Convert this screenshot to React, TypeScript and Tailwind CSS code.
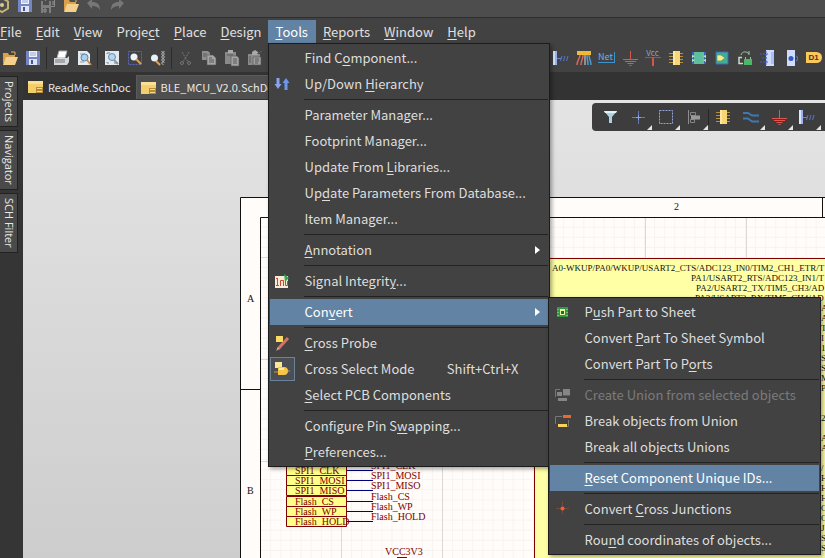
import React from 'react';

type IconProps = { children: React.ReactNode; size?: number };

const Icon: React.FC<IconProps> = ({ children, size = 18 }) => (
  <svg width={size} height={size} viewBox="0 0 18 18" fill="none" className="shrink-0" aria-hidden="true">
    {children}
  </svg>
);

/* ---------- Icons ---------- */

const FolderIcon = () => (
  <Icon>
    <path d="M2 15V4h5l1 2h6v3H6L2 15z" fill="#d9a14d" />
    <path d="M5 8h12l-3 8H2l3-8z" fill="#f5d08c" />
    <path d="M10 3h4v3" stroke="#e8b060" />
  </Icon>
);

const SaveIcon = () => (
  <Icon>
    <path d="M2 2h14v14H2z" fill="#7486c4" />
    <path d="M5 2h8v6H5z" fill="#eef1fa" />
    <path d="M6 4h6M6 6h6" stroke="#9aa6d2" />
    <path d="M5 10h8v6H5z" fill="#dfe4f4" />
    <path d="M7 11h2v4H7z" fill="#46549a" />
  </Icon>
);

const SaveAllIcon = () => (
  <Icon>
    <path d="M6.500 1.500h9v9h-9z" stroke="#8a8a8a" />
    <path d="M2 5h10v12H2z" fill="#7e7e7e" />
    <path d="M4 5h6v4H4zM4 12h6v5H4z" fill="#4d4d4d" />
    <path d="M5 13h2v3H5zM9 3h5M14 5v4" stroke="#9a9a9a" />
  </Icon>
);

const UndoIcon = ({ flip = false }: { flip?: boolean }) => (
  <Icon>
    <g transform={flip ? 'translate(18 0) scale(-1 1)' : undefined}>
      <path d="M2 7l5-4v3c5 0 8 2 8 8-2-3-4-4-8-4v3L2 7z" fill="#777" />
    </g>
  </Icon>
);

const PrintIcon = () => (
  <Icon>
    <path d="M7 2h8l-2 7H5l2-7z" fill="#fff" stroke="#aaa" />
    <path d="M2 9h13l2-2v6l-2 3H2V9z" fill="#d5d9dc" />
    <path d="M3 11h10M3 13h10" stroke="#777" />
  </Icon>
);

const PreviewIcon = () => (
  <Icon>
    <path d="M3 2h9l3 3v11H3z" fill="#e6ebef" />
    <path d="M5 5h5M5 13h4" stroke="#99a" />
    <circle cx="9.500" cy="8.500" r="3.500" fill="#a9d2f0" stroke="#587fa6" />
    <path d="M12 11l4 5" stroke="#c98d4a" strokeWidth="2" />
  </Icon>
);

const ZoomFitIcon = () => (
  <Icon>
    <path d="M2 2h14v14H2z" fill="#e3eaee" />
    <path d="M4 5V4h3M14 13v1h-3M4 13v1h2" stroke="#789" />
    <circle cx="9" cy="8" r="3.500" fill="#b5d6ee" stroke="#6a8cab" />
    <path d="M11 11l4 4" stroke="#8a98a6" strokeWidth="2" />
  </Icon>
);

const ZoomAreaIcon = () => (
  <Icon>
    <path d="M2.500 2.500h13v13h-13z" stroke="#5968b8" strokeDasharray="2 1" />
    <circle cx="8" cy="8" r="3.500" fill="#eef5fa" />
    <path d="M10 10l5 5" stroke="#dfa45c" strokeWidth="2" />
  </Icon>
);

const ZoomObjectIcon = () => (
  <Icon>
    <circle cx="5.500" cy="9" r="3.500" fill="#e8f1f8" />
    <path d="M7 12l4 4" stroke="#dfa45c" strokeWidth="2" />
    <path d="M12.500 2l3 3-3 3 3 3-3 3 2 2M15.500 2l-3 3 3 3-3 3 3 3" stroke="#ddd" strokeWidth=".8" />
  </Icon>
);

const CutIcon = () => (
  <Icon>
    <path d="M5 3l6 10M12 3L6 13" stroke="#777" strokeDasharray="2 1" />
    <circle cx="5" cy="14" r="1.500" stroke="#777" />
    <circle cx="12" cy="14" r="1.500" stroke="#777" />
  </Icon>
);

const CopyIcon = () => (
  <Icon>
    <path d="M2 2h6l2 2v7H2z" fill="#8f8f8f" />
    <path d="M7 6h6l3 3v7H7z" fill="#a5a5a5" stroke="#555" strokeWidth=".6" />
    <path d="M9 9h3M9 11h5M9 13h5M3 5h4M3 7h3" stroke="#5a5a5a" />
  </Icon>
);

const PasteIcon = () => (
  <Icon>
    <path d="M2 3h11v12H2z" fill="#8a8a8a" />
    <path d="M5 1h5v3H5z" fill="#aaa" />
    <path d="M8 7h6l2 2v8H8z" fill="#a3a3a3" stroke="#555" strokeWidth=".6" />
    <path d="M10 10h4M10 12h4M10 14h4M4 6h6" stroke="#5a5a5a" />
  </Icon>
);

const StampIcon = () => (
  <Icon>
    <path d="M2 5h12v11H2z" fill="#8a8a8a" />
    <path d="M6 3l3-2 3 2v3H6z" fill="#a8a8a8" />
    <path d="M7 8h8v8H7z" fill="#9d9d9d" stroke="#555" strokeWidth=".6" />
    <path d="M9 10h4M9 12h4M9 14h3M4 7v7M11 5l5-3" stroke="#5c5c5c" />
  </Icon>
);

const BusEntryIcon = () => (
  <Icon>
    <path d="M1 2h4v14H1z" fill="#dbe6ff" />
    <path d="M4 2v14" stroke="#5d7fe0" />
    <path d="M5 9.500h4" stroke="#6f86c8" />
    <path d="M8.500 12l1.500-5M11.500 12l1.500-5M14.500 12l1.500-5" stroke="#5577d4" />
  </Icon>
);

const HarnessIcon = () => (
  <Icon>
    <path d="M2 2h14v4H2z" fill="#f1b93a" />
    <path d="M5 6c0 4-3 5-3 10M8 6c0 5-2 5-2 10" stroke="#d9695b" strokeWidth="1.500" />
    <path d="M10 6v10" stroke="#ddd" />
    <path d="M12 6c0 5 1 5 1 10M14 6c0 4 2 5 2 10" stroke="#4f9bd0" strokeWidth="1.500" />
  </Icon>
);

const NetLabelIcon = () => (
  <span className="flex h-[11px] items-center border-r border-b border-[#3f93c8] pr-px text-[9px] text-[#69b4e4]">
    Net
  </span>
);

const GroundIcon = () => (
  <Icon>
    <path d="M9.500 2v8M2 10.500h15M4 12.500h11M6.500 14.500h6M8.500 16.500h2" stroke="#dd5650" />
  </Icon>
);

const VccIcon = () => (
  <span className="flex flex-col items-center text-[8px] leading-[7px] text-[#8fa3c8]">
    Vcc
    <svg width="16" height="10" viewBox="0 0 16 10" fill="none" aria-hidden="true">
      <path d="M0 1.500h16" stroke="#a8514d" />
      <path d="M8 2v8" stroke="#d9534b" strokeWidth="2" />
    </svg>
  </span>
);

const PartIcon = () => (
  <Icon>
    <path d="M2 4.500h14M2 7.500h14M2 10.500h14M2 13.500h14" stroke="#b58f3c" />
    <path d="M6 2h7v14H6z" fill="#f9d675" />
    <path d="M6 2h2v14H6z" fill="#fce7a6" />
  </Icon>
);

const SheetSymbolIcon = () => (
  <Icon>
    <path d="M2 3h14v12H2z" fill="#3d62b8" />
    <path d="M4 3h10v12H4z" fill="#5fbf9d" />
    <path d="M2 6l3 1-3 2M16 6l-3 1 3 2M2 10l3 1-3 2M16 10l-3 1 3 2" fill="#bfe6d0" />
  </Icon>
);

const SheetEntryIcon = () => (
  <Icon>
    <path d="M3 3h12v12H3z" fill="#3fae98" stroke="#3f66b8" />
    <path d="M4 6h4l4 3-4 3H4z" fill="#f3eb8e" stroke="#5a8a4a" strokeWidth=".6" />
  </Icon>
);

const DeviceSheetIcon = () => (
  <Icon>
    <path d="M5 6c1-4 6-4 8-1M13 2v4" stroke="#9fc7a8" />
    <path d="M6 8.500H3v6h4" stroke="#c8dccb" strokeWidth="1.500" />
    <path d="M8 10h8v6H8z" fill="#4eb569" />
    <path d="M9.500 10V8M14.500 10V8" stroke="#7fd193" />
  </Icon>
);

const ConnectorIcon = () => (
  <Icon>
    <path d="M7 1h8v16H7z" fill="#cfdcfb" />
    <path d="M12 3h3v12h-3z" fill="#a9bff5" />
    <path d="M1 5h8M3 9h6M1 13h8M7 2v14" stroke="#3f61c8" strokeDasharray="2 1" />
  </Icon>
);

const HarnessEntryIcon = () => (
  <Icon>
    <path d="M5 1h8v16H5z" fill="#cfdcfb" />
    <circle cx="9" cy="9.500" r="2.500" fill="#3558c4" />
    <path d="M14 7c2 0 2 5 0 5" stroke="#6d8be0" />
  </Icon>
);

const PortIcon = () => (
  <span className="flex h-[11px] w-[16px] items-center justify-center rounded-r-md bg-[#f9c95e] font-['Liberation_Sans',sans-serif] text-[8px] font-bold text-[#4a3310]">
    D1
  </span>
);

const FilterIcon = () => (
  <Icon>
    <path d="M3 3h13l-5 6v6H8V9L3 3z" fill="#a9d3e2" />
    <path d="M3 3h13l-1 2H4z" fill="#e2f2f7" />
  </Icon>
);

const CrosshairIcon = () => (
  <Icon>
    <path d="M9.500 3v13M3 9.500h13" stroke="#6378b4" />
    <path d="M9.500 7v5M7 9.500h5" stroke="#8fa3dc" />
  </Icon>
);

const SelectionIcon = () => (
  <Icon>
    <path d="M2.500 2.500h13v13h-13z" stroke="#94a4e2" strokeDasharray="2 1" />
  </Icon>
);

const AlignIcon = () => (
  <Icon>
    <path d="M3.500 2v14" stroke="#8d8d8d" />
    <path d="M5.500 4.500h5v3h-5zM5.500 11.500h4v3h-4z" stroke="#858585" />
    <path d="M6 7.500h9v4H6z" fill="#9a9a9a" />
  </Icon>
);

const WireIcon = () => (
  <Icon>
    <path d="M1 5h5l4 2.500h7M1 10.500h5l4 3h7" stroke="#3e78b4" strokeWidth="2" />
  </Icon>
);

const DocIcon = () => (
  <svg width="15" height="12" viewBox="0 0 15 12" className="shrink-0" aria-hidden="true">
    <path d="M0 0h15v12H0z" fill="#f3cf6c" />
    <path d="M0 0h15v3H0z" fill="#f9e094" />
    <path d="M8 6h7v6H8z" fill="#b98a35" />
    <path d="M9 7h5v1H9zM9 10h5v1H9z" fill="#f6dc8b" />
  </svg>
);

const HierarchyIcon = () => (
  <Icon>
    <path d="M3.500 3h3v6h2L5 14 1.500 9h2z" fill="#86a5ec" />
    <path d="M11.500 15h3V8h2L13 3 9.500 8h2z" fill="#6f96ee" />
  </Icon>
);

const SignalIcon = () => (
  <Icon>
    <path d="M2 4h13v12H2z" fill="#f7ead9" />
    <path d="M3 6.500h2M4.500 7v6M3 13.500h3M7.500 14V8.500h3V14M12.500 8v5.500h2V9" stroke="#c54a2e" />
    <path d="M11 2l5 4-4 4z" fill="#37a84c" />
  </Icon>
);

const ProbeIcon = () => (
  <Icon>
    <path d="M3 2h7v6H3z" fill="#f8dd62" />
    <path d="M15 4L5 15" stroke="#d47564" strokeWidth="3" />
    <path d="M5 13l-2 4 3-2" fill="#e0b1a6" />
  </Icon>
);

const CrossSelectIcon = () => (
  <Icon>
    <path d="M2 2h7v6H2z" fill="#fbe697" />
    <path d="M5 7h6c3 0 4 2 4 4s-1 4-4 4H5z" fill="#f6c644" />
    <path d="M1 12h4M15 11h2" stroke="#c99a35" />
    <path d="M6 8h5v2H6z" fill="#fde9a2" />
  </Icon>
);

const PushPartIcon = () => (
  <Icon>
    <path d="M4 4h11v10H4z" fill="#2d9a46" />
    <path d="M7 6h5v6H7z" fill="#e9f29f" />
    <path d="M8 8h3v3H8z" fill="#1f6d31" />
    <path d="M5 6v1M5 9v1M5 12v1M14 6v1M14 9v1M14 12v1" stroke="#bde7a5" />
  </Icon>
);

const BreakUnionIcon = () => (
  <Icon>
    <path d="M2.500 12V4.500H9M15.500 8v6.500H14" stroke="#777" />
    <path d="M10 3h8v3h-8z" fill="#ee6a2a" />
    <path d="M5 12h9v3H5z" fill="#fbd25c" />
  </Icon>
);

const CreateUnionIcon = () => (
  <Icon>
    <path d="M2.500 11V3.500H7" stroke="#777" />
    <path d="M4 6h5v4H4zM10 3h7v6h-7zM5 12h9v3H5z" fill="#858585" />
    <path d="M10 9h7v1h-7z" fill="#606060" />
  </Icon>
);

const JunctionIcon = () => (
  <Icon>
    <path d="M9.500 1v13M3 8.500h13" stroke="#6d4a40" />
    <circle cx="9.500" cy="8.500" r="2" fill="#f0603a" />
  </Icon>
);

/* ---------- Menus ---------- */

// "&" marks the character that carries the access-key underline
const Mnemonic: React.FC<{ text: string }> = ({ text }) => {
  const at = text.indexOf('&');
  if (at < 0) return <span>{text}</span>;
  return (
    <span className="whitespace-nowrap">
      {text.slice(0, at)}
      <span className="underline underline-offset-2">{text[at + 1]}</span>
      {text.slice(at + 2)}
    </span>
  );
};

type Item = {
  label: string;
  icon?: React.ReactNode;
  shortcut?: string;
  active?: boolean;
  checked?: boolean;
  disabled?: boolean;
  submenu?: (Item | null)[];
};

const convertMenu: (Item | null)[] = [
  { label: 'P&ush Part to Sheet', icon: <PushPartIcon /> },
  { label: 'Convert &Part To Sheet Symbol' },
  { label: 'Convert Part To P&orts' },
  null,
  { label: 'Create Union from selected objects', icon: <CreateUnionIcon />, disabled: true },
  { label: 'Break objects from Union', icon: <BreakUnionIcon /> },
  { label: 'Break all objects Unions' },
  null,
  { label: '&Reset Component Unique IDs...', active: true },
  null,
  { label: 'Convert &Cross Junctions', icon: <JunctionIcon /> },
  null,
  { label: 'Rou&nd coordinates of objects...' },
];

const toolsMenu: (Item | null)[] = [
  { label: 'Find C&omponent...' },
  { label: 'Up/Down &Hierarchy', icon: <HierarchyIcon /> },
  null,
  { label: 'Parameter Mana&ger...' },
  { label: 'Footprint Mana&ger...' },
  { label: 'Update From &Libraries...' },
  { label: 'Up&date Parameters From Database...' },
  { label: 'Item Manager...' },
  null,
  { label: '&Annotation', submenu: [] },
  null,
  { label: 'Signal Integrit&y...', icon: <SignalIcon /> },
  null,
  { label: 'Con&vert', active: true, submenu: convertMenu },
  null,
  { label: '&Cross Probe', icon: <ProbeIcon /> },
  { label: 'Cross Select Mode', icon: <CrossSelectIcon />, shortcut: 'Shift+Ctrl+X', checked: true },
  { label: '&Select PCB Components' },
  null,
  { label: 'Configure Pin S&wapping...' },
  { label: '&Preferences...' },
];

const Menu: React.FC<{ items: (Item | null)[]; label: string }> = ({ items, label }) => (
  <ul
    role="menu"
    aria-label={label}
    className="border border-[#1c1c1c] bg-[#424242] p-px text-[13px] text-[#dedede] shadow-[2px_2px_4px_rgba(0,0,0,0.35)]"
  >
    {items.map((item, i) =>
      item === null ? (
        <li key={i} role="separator" className="my-[2px] ml-[34px] h-px bg-[#222]" />
      ) : (
        <li key={i} role="none" className="relative">
          <button
            role="menuitem"
            disabled={item.disabled}
            className={`flex h-[26px] w-full items-center text-left ${item.active ? 'bg-[#6283a3] text-white' : ''} ${
              item.disabled ? 'text-[#7b7b7b]' : ''
            }`}
          >
            <span
              className={`mr-[10px] flex h-6 w-[25px] items-center justify-center ${
                item.checked ? 'border border-[#6d8296] bg-[#4a4f55]' : ''
              }`}
            >
              {item.icon}
            </span>
            <Mnemonic text={item.label} />
            {item.shortcut && <span className="ml-auto pr-[29px]">{item.shortcut}</span>}
            {item.submenu && (
              <svg width="5" height="8" viewBox="0 0 5 8" className="mr-2 ml-auto" aria-hidden="true">
                <path d="M0 0l5 4-5 4z" fill="#fff" />
              </svg>
            )}
          </button>
          {item.active && item.submenu && (
            <div className="absolute -top-[2px] left-full z-10 w-[273px]">
              <Menu items={item.submenu} label="Convert" />
            </div>
          )}
        </li>
      ),
    )}
  </ul>
);

const MenuBar = () => {
  const menus = ['&File', '&Edit', '&View', 'Proje&ct', '&Place', '&Design', '&Tools', '&Reports', '&Window', '&Help'];
  return (
    <nav className="flex h-[25px] bg-[#424242] pt-[2px] text-[13px] text-[#e0e0e0]">
      <div className="-ml-[7px] flex">
        {menus.map((name) => (
          <div key={name} className="relative">
            <button
              className={`flex h-[23px] items-center ${
                name === '&Tools' ? '-ml-px bg-[#6283a3] px-2 text-white' : 'px-[7px]'
              }`}
            >
              <Mnemonic text={name} />
            </button>
            {name === '&Tools' && (
              <div className="absolute top-full -left-px z-20 w-[282px]">
                <Menu items={toolsMenu} label="Tools" />
              </div>
            )}
          </div>
        ))}
      </div>
    </nav>
  );
};

/* ---------- Toolbars ---------- */

const ToolButton: React.FC<{ label: string; children: React.ReactNode }> = ({ label, children }) => (
  <button aria-label={label} className="flex h-6 w-[23px] shrink-0 items-center justify-center">
    {children}
  </button>
);

const Divider = () => <span className="mx-[2px] h-[22px] w-px bg-[#2c2c2c]" />;

const TitleBar = () => (
  <header className="flex h-[18px] items-end overflow-hidden border-b border-[#2f2f2f] bg-[#4d4d4d]">
    <span className="-ml-[10px] flex">
      <ToolButton label="System menu">
        <Icon>
          <path d="M9 2l6 3.500v7L9 16l-6-3.500" stroke="#c8b273" strokeWidth="2" />
          <circle cx="9" cy="9" r="2" fill="#d8c98f" />
        </Icon>
      </ToolButton>
    </span>
    <ToolButton label="Save"><SaveIcon /></ToolButton>
    <ToolButton label="Save All"><SaveAllIcon /></ToolButton>
    <ToolButton label="Open"><FolderIcon /></ToolButton>
    <ToolButton label="Undo"><UndoIcon /></ToolButton>
    <ToolButton label="Redo"><UndoIcon flip /></ToolButton>
  </header>
);

const Toolbar = () => (
  <div className="flex h-[29px] items-center justify-between overflow-hidden bg-[#424242]">
    <div className="-ml-[2px] flex items-center">
      <ToolButton label="Open"><FolderIcon /></ToolButton>
      <ToolButton label="Save"><SaveIcon /></ToolButton>
      <Divider />
      <ToolButton label="Print"><PrintIcon /></ToolButton>
      <ToolButton label="Print Preview"><PreviewIcon /></ToolButton>
      <Divider />
      <ToolButton label="Fit Document"><ZoomFitIcon /></ToolButton>
      <ToolButton label="Zoom Area"><ZoomAreaIcon /></ToolButton>
      <ToolButton label="Zoom Selected"><ZoomObjectIcon /></ToolButton>
      <Divider />
      <ToolButton label="Cut"><CutIcon /></ToolButton>
      <ToolButton label="Copy"><CopyIcon /></ToolButton>
      <ToolButton label="Paste"><PasteIcon /></ToolButton>
      <ToolButton label="Rubber Stamp"><StampIcon /></ToolButton>
    </div>
    <div className="flex items-center">
      <ToolButton label="Bus Entry"><BusEntryIcon /></ToolButton>
      <ToolButton label="Signal Harness"><HarnessIcon /></ToolButton>
      <ToolButton label="Net Label"><NetLabelIcon /></ToolButton>
      <ToolButton label="GND Power Port"><GroundIcon /></ToolButton>
      <ToolButton label="VCC Power Port"><VccIcon /></ToolButton>
      <ToolButton label="Place Part"><PartIcon /></ToolButton>
      <ToolButton label="Sheet Symbol"><SheetSymbolIcon /></ToolButton>
      <ToolButton label="Sheet Entry"><SheetEntryIcon /></ToolButton>
      <ToolButton label="Device Sheet"><DeviceSheetIcon /></ToolButton>
      <ToolButton label="Harness Connector"><ConnectorIcon /></ToolButton>
      <ToolButton label="Harness Entry"><HarnessEntryIcon /></ToolButton>
      <ToolButton label="Port"><PortIcon /></ToolButton>
    </div>
  </div>
);

const activeBar = [
  { label: 'Filter', icon: <FilterIcon />, more: false },
  { label: 'Move', icon: <CrosshairIcon />, more: true },
  { label: 'Selection', icon: <SelectionIcon />, more: true },
  { label: 'Align', icon: <AlignIcon />, more: true },
  { label: 'Part', icon: <PartIcon />, more: false },
  { label: 'Wire', icon: <WireIcon />, more: true },
  { label: 'Power Port', icon: <GroundIcon />, more: true },
  { label: 'Harness', icon: <BusEntryIcon />, more: true },
];

const ActiveBar = () => (
  <div className="absolute top-[3px] right-0 flex h-7 items-center rounded-l-sm bg-[#3d3d3d] pr-1 pl-1">
    {activeBar.map(({ label, icon, more }) => (
      <React.Fragment key={label}>
        {label === 'Part' && <span className="h-4 w-px bg-[#262626]" />}
        <button aria-label={label} className="relative flex h-7 w-7 items-center justify-center">
          {icon}
          {more && (
            <svg width="5" height="5" viewBox="0 0 5 5" className="absolute right-0 bottom-px" aria-hidden="true">
              <path d="M5 0v5H0z" fill="#e4e4e4" />
            </svg>
          )}
        </button>
      </React.Fragment>
    ))}
  </div>
);

/* ---------- Schematic ---------- */

const ports = [
  { name: 'SPI1_CLK', y: 470 },
  { name: 'SPI1_MOSI', y: 480 },
  { name: 'SPI1_MISO', y: 490 },
  { name: 'Flash_CS', y: 501 },
  { name: 'Flash_WP', y: 511 },
  { name: 'Flash_HOLD', y: 521 },
];

const pinNames = [
  { text: 'A0-WKUP/PA0/WKUP/USART2_CTS/ADC123_IN0/TIM2_CH1_ETR/T', x: 552, y: 271 },
  { text: 'PA1/USART2_RTS/ADC123_IN1/T', x: 691, y: 281 },
  { text: 'PA2/USART2_TX/TIM5_CH3/AD', x: 696, y: 291 },
  { text: 'PA3/USART2_RX/TIM5_CH4/AD', x: 695, y: 301 },
];

const edgeLetters = 'AATI1SSMP  2 AA /HHHOOJSS'.split('');

// Coordinates are window based, shifted by the panel and tab strip
const Schematic = () => (
  <svg className="absolute inset-0 h-full w-full font-['Liberation_Serif',serif]" fontSize="10" aria-label="Schematic sheet">
    <defs>
      <pattern id="minor" x="240" y="257" width="10.100" height="10.100" patternUnits="userSpaceOnUse">
        <path d="M0 .5h10.100M.5 0v10.100" stroke="#f6f3f0" fill="none" />
      </pattern>
    </defs>
    <g transform="translate(-23 -100)">
      <path d="M240.500 197.500H2400V1600H240.500z" fill="#fffcf9" stroke="#111" />
      <path d="M260.500 217.500H2400V1600H260.500z" fill="url(#minor)" stroke="#111" />
      <path d="M240 389.500h20M822.500 197v20" stroke="#111" />
      <path
        d="M341.500 218v400M442.500 218v400M645.500 218v40M746.500 218v40M261 257.500h274M261 359.500h274M261 461.500h274"
        stroke="#dcdad8"
      />
      <text x="247" y="302" fill="#111">A</text>
      <text x="247" y="494" fill="#111">B</text>
      <text x="674" y="210" fill="#111">2</text>

      <path d="M534.500 258.500H2400V1600H534.500z" fill="#ffffa6" stroke="#800000" />
      <g fill="#111" fontSize="9">
        {pinNames.map((p) => (
          <text key={p.y} x={p.x} y={p.y}>{p.text}</text>
        ))}
        {edgeLetters.map((c, i) => (
          <text key={i} x="821" y={311 + i * 10}>{c}</text>
        ))}
      </g>

      {ports.map((p) => (
        <g key={p.name}>
          <path d={`M286.500 ${p.y - 4.5}h60v10h-60z`} fill="#ffff8a" stroke="#800000" />
          <path d={`M347 ${p.y + 0.5}h26`} stroke="#000080" />
          <text x="295" y={p.y + 4} fill="#800000">{p.name}</text>
          <text x="371" y={p.y - 1} fill="#800000">{p.name}</text>
        </g>
      ))}
      <text x="385" y="555" fill="#800000">VCC3V3</text>
      <path d="M397 557.500h10" stroke="#800000" />
    </g>
  </svg>
);

/* ---------- Page ---------- */

const App: React.FC = () => {
  const panels = ['Projects', 'Navigator', 'SCH Filter'];
  return (
    <div className="flex h-screen flex-col overflow-hidden bg-[#333] font-['Noto_Sans_CJK_SC','Noto_Sans',sans-serif]">
      <TitleBar />
      <MenuBar />
      <Toolbar />
      <div className="flex min-h-0 flex-1">
        <aside className="flex w-[23px] shrink-0 flex-col items-start gap-[3px] bg-[#353535] pt-1">
          {panels.map((name) => (
            <button
              key={name}
              className="flex w-[18px] justify-center border border-l-0 border-[#222] bg-[#4a4a4a] py-1 text-[#e8e8e8]"
            >
              <span className="font-['Open_Sans',sans-serif] text-[11px] leading-4 whitespace-nowrap [writing-mode:vertical-rl]">
                {name}
              </span>
            </button>
          ))}
        </aside>
        <div className="flex min-w-0 flex-1 flex-col">
          <div className="flex h-7 shrink-0 items-end bg-[#333] pb-px text-[11px] text-[#e8e8e8]">
            <button className="flex h-6 items-center gap-[5px] px-[5px]">
              <DocIcon />
              ReadMe.SchDoc
            </button>
            <button className="flex h-6 items-center gap-[5px] border border-b-0 border-[#5a5a5a] bg-[#4f4f4f] px-1">
              <DocIcon />
              BLE_MCU_V2.0.SchDoc
            </button>
          </div>
          <main className="relative flex-1 overflow-hidden bg-linear-to-b from-[#e4e4e4] to-[#cdcdcd]">
            <Schematic />
            <ActiveBar />
          </main>
        </div>
      </div>
    </div>
  );
};

export default App;
